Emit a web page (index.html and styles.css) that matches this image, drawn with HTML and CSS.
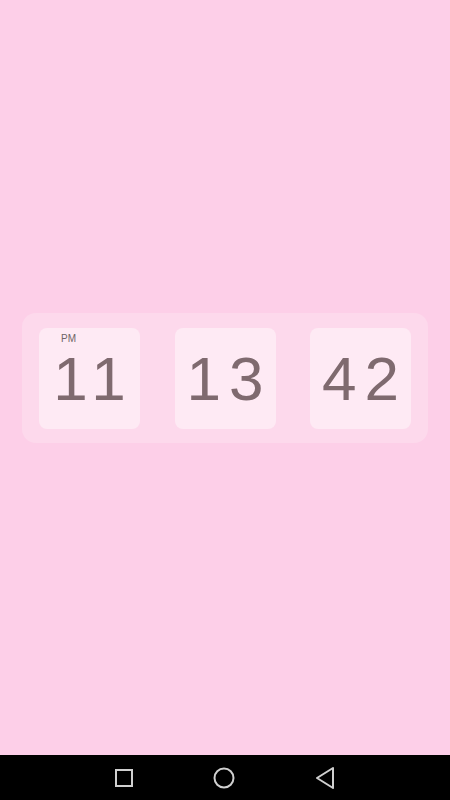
FILE: index.html
```html
<!DOCTYPE html>
<html>
<head>
<meta charset="utf-8">
<link rel="stylesheet" href="styles.css">
</head>
<body>
<div class="screen">
  <main class="content">
    <div class="clock">
      <div class="card">
        <span class="ampm">PM</span>
        <span class="digits">11</span>
      </div>
      <div class="card">
        <span class="digits">13</span>
      </div>
      <div class="card">
        <span class="digits">42</span>
      </div>
    </div>
  </main>
  <nav class="navbar">
    <svg class="nav-icon" width="20" height="20" viewBox="0 0 20 20"><rect x="2" y="2" width="16" height="16" fill="none" stroke="#d0d0d0" stroke-width="2"/></svg>
    <svg class="nav-icon" width="24" height="24" viewBox="0 0 24 24"><circle cx="12" cy="12" r="9.5" fill="none" stroke="#d0d0d0" stroke-width="2"/></svg>
    <svg class="nav-icon" width="22" height="24" viewBox="0 0 22 24"><path d="M19 2 L3 12 L19 22 Z" fill="none" stroke="#d0d0d0" stroke-width="2" stroke-linejoin="round"/></svg>
  </nav>
</div>
</body>
</html>
```

FILE: styles.css
```css
html, body {
  margin: 0;
  padding: 0;
}
body {
  font-family: "Liberation Sans", Arial, sans-serif;
  background: #fdcfe8;
}
.screen {
  width: 450px;
  height: 800px;
  display: flex;
  flex-direction: column;
}
.content {
  flex: 1;
  display: flex;
  align-items: center;
  justify-content: center;
}
.clock {
  width: 406px;
  box-sizing: border-box;
  padding: 15px 17px 14px 17px;
  background: #fdd9ec;
  border-radius: 14px;
  display: flex;
  justify-content: space-between;
}
.card {
  position: relative;
  width: 101px;
  height: 101px;
  background: #feeaf4;
  border-radius: 8px;
  display: flex;
  align-items: center;
  justify-content: center;
}
.ampm {
  position: absolute;
  left: 22px;
  top: 5px;
  font-size: 10px;
  color: #6e6466;
}
.digits {
  font-size: 62px;
  letter-spacing: 8px;
  padding-left: 8px;
  color: #7f6a6f;
  line-height: 1;
  margin-top: 2px;
}
.navbar {
  height: 45px;
  background: #000;
  display: flex;
  align-items: center;
  justify-content: center;
  gap: 78px;
}
```
